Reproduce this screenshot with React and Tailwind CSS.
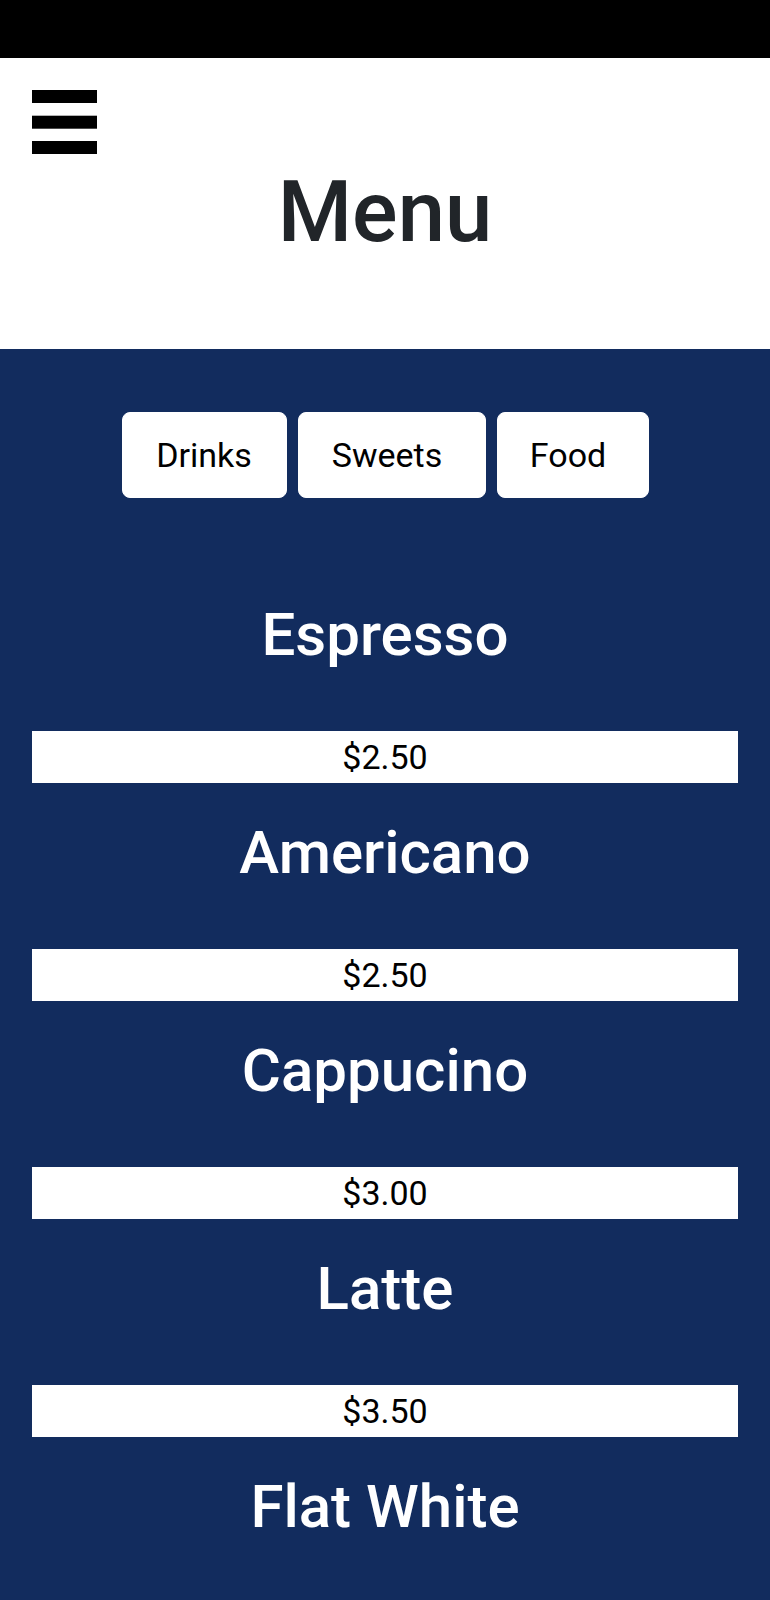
import React from "react";

const items = [
  { name: "Espresso", price: "$2.50" },
  { name: "Americano", price: "$2.50" },
  { name: "Cappucino", price: "$3.00" },
  { name: "Latte", price: "$3.50" },
  { name: "Flat White", price: null },
];

export default function App() {
  return (
    <div className="min-h-screen flex flex-col font-['Roboto',sans-serif] bg-[#122c5e]">
      <div className="h-[58px] bg-black" />
      <header className="h-[291px] bg-white flex flex-col pt-[32px]">
        <div className="pl-[32px]">
          <svg width="65" height="64" viewBox="0 0 65 64" aria-label="menu">
            <rect x="0" y="0" width="65" height="13" fill="#000" />
            <rect x="0" y="25.7" width="65" height="13" fill="#000" />
            <rect x="0" y="51" width="65" height="13" fill="#000" />
          </svg>
        </div>
        <h1 className="mt-[7px] text-center text-[85px] leading-[102px] font-medium text-[#212529]">
          Menu
        </h1>
      </header>
      <main className="flex-1 bg-[#122c5e] pt-[63px] pb-[40px]">
        <div className="flex justify-center gap-[11px]">
          <button className="w-[165px] bg-white border border-white rounded-lg py-[18px] text-[34px] leading-[48px] text-black text-center">
            Drinks
          </button>
          <button className="w-[188px] bg-white border border-white rounded-lg py-[18px] pr-[9px] text-[34px] leading-[48px] text-black text-center">
            Sweets
          </button>
          <button className="w-[152px] bg-white border border-white rounded-lg py-[18px] pr-[9px] text-[34px] leading-[48px] text-black text-center">
            Food
          </button>
        </div>
        <div className="flex flex-col pt-[67px]">
          {items.map((it) => (
            <div key={it.name} className="flex flex-col">
              <h2 className="mt-[34px] mb-[60px] text-center text-[60px] leading-[72px] font-medium text-white">
                {it.name}
              </h2>
              {it.price && (
                <div className="mx-[32px] h-[52px] bg-white pt-[2px] text-center text-[34px] leading-[48px] text-black">
                  {it.price}
                </div>
              )}
            </div>
          ))}
        </div>
      </main>
    </div>
  );
}
